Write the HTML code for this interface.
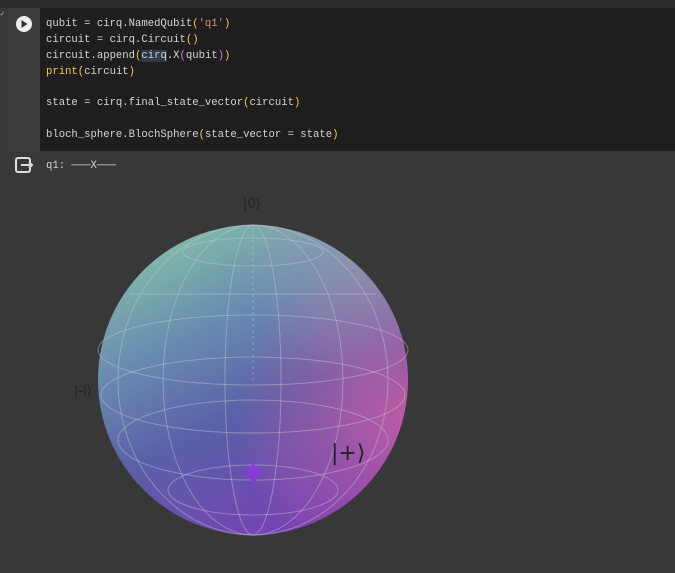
<!DOCTYPE html>
<html><head><style>
body{margin:0;width:675px;height:573px;background:#383838;overflow:hidden;position:relative;font-family:"Liberation Mono",monospace}
.top{position:absolute;left:0;top:0;width:675px;height:8px;background:#2a2a2a}
.gut{position:absolute;left:8px;top:8px;width:32px;height:143px;background:#3c3c3c}
.code{position:absolute;left:40px;top:8px;width:635px;height:143px;background:#1e1e1e}
pre{position:absolute;left:46px;top:17px;margin:0;font-size:10.6px;line-height:15.85px;color:#d4d4d4;font-family:"Liberation Mono",monospace}
.y{color:#f7c948}.s{color:#ce9178}.p{color:#d670d6}
.out{position:absolute;left:46px;top:160px;font-size:10.6px;color:#d4d4d4}
.lab{position:absolute;color:#222;font-family:"DejaVu Sans",sans-serif}
</style></head><body>
<div class="top"></div><div class="gut"></div><div class="code"></div>
<svg style="position:absolute;left:0;top:0" width="40" height="40"><text x="0" y="16" font-size="8" fill="#8c8">✓</text><circle cx="24" cy="24" r="8" fill="#eee"/><path d="M21.5 20v8l6-4z" fill="#333"/></svg>
<pre>qubit = cirq.NamedQubit<span class="y">(</span><span class="s">'q1'</span><span class="y">)</span>
circuit = cirq.Circuit<span class="y">()</span>
circuit.append<span class="y">(</span><span style="background:#2f3a48">cirq</span>.X<span class="p">(</span>qubit<span class="p">)</span><span class="y">)</span>
<span class="y">print(</span>circuit<span class="y">)</span>

state = cirq.final_state_vector<span class="y">(</span>circuit<span class="y">)</span>

bloch_sphere.BlochSphere<span class="y">(</span>state_vector = state<span class="y">)</span></pre>
<svg style="position:absolute;left:14px;top:156px" width="22" height="20"><rect x="2" y="2" width="14" height="14" rx="2" fill="none" stroke="#ddd" stroke-width="2"/><rect x="12" y="6" width="8" height="6" fill="#383838"/><path d="M7 9h11M15 6l3 3-3 3" stroke="#ddd" stroke-width="2" fill="none"/></svg>
<div class="out">q1: ───X───</div>
<svg style="position:absolute;left:0;top:0" width="675" height="573">
<defs>
<linearGradient id="g" x1="0.2" y1="0" x2="0.7" y2="1">
<stop offset="0" stop-color="#86c4a6"/><stop offset="0.3" stop-color="#6a8fb0"/><stop offset="0.6" stop-color="#5a5ea8"/><stop offset="1" stop-color="#7a3fb5"/></linearGradient>
<radialGradient id="r" cx="1" cy="0.62" r="0.55"><stop offset="0" stop-color="#d85fa0" stop-opacity="0.75"/><stop offset="1" stop-color="#d85fa0" stop-opacity="0"/></radialGradient>
<radialGradient id="t" cx="0.85" cy="0.1" r="0.4"><stop offset="0" stop-color="#b0a0b0" stop-opacity="0.5"/><stop offset="1" stop-color="#b0a0b0" stop-opacity="0"/></radialGradient>
</defs>
<circle cx="253" cy="380" r="155" fill="url(#g)"/>
<circle cx="253" cy="380" r="155" fill="url(#r)"/>
<circle cx="253" cy="380" r="155" fill="url(#t)"/>
<g fill="none" stroke="#c8c8d8" stroke-opacity="0.45" stroke-width="1">
<ellipse cx="253" cy="350" rx="155" ry="35"/>
<ellipse cx="253" cy="395" rx="152" ry="38"/>
<ellipse cx="253" cy="440" rx="135" ry="40"/>
<ellipse cx="253" cy="490" rx="85" ry="25"/>
<ellipse cx="253" cy="252" rx="70" ry="14"/>
<line x1="130" y1="294" x2="376" y2="294"/>
<ellipse cx="253" cy="380" rx="28" ry="155"/>
<ellipse cx="253" cy="380" rx="90" ry="155"/>
<ellipse cx="253" cy="380" rx="135" ry="155"/>
<line x1="253" y1="228" x2="253" y2="380" stroke-dasharray="3 3"/>
</g>
<path d="M244 470l9-6 9 6-9 15z" fill="#8a3ad8"/>
</svg>
<div class="lab" style="left:243px;top:197px;font-size:13px">|0⟩</div>
<div class="lab" style="left:74px;top:384px;font-size:13px">|-i⟩</div>
<div class="lab" style="left:331px;top:441px;font-size:22px">|+⟩</div>
</body></html>
